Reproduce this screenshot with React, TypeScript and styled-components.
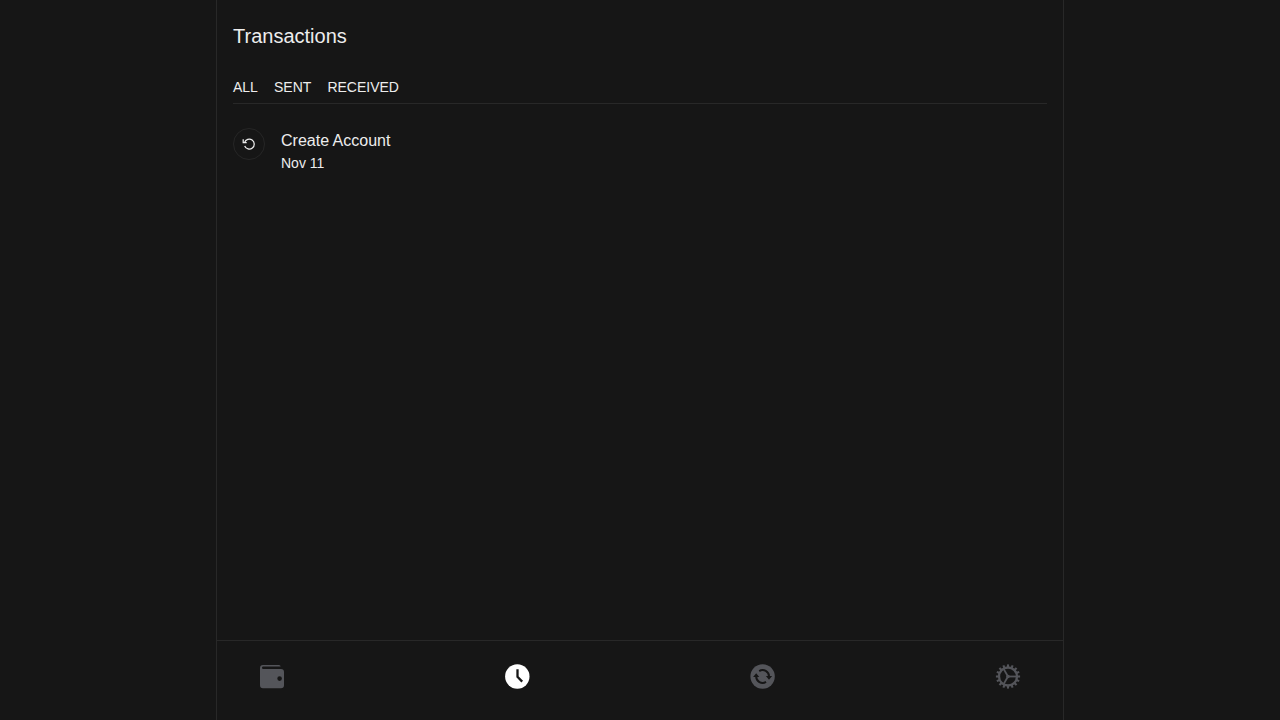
import React from "react";
import styled, { createGlobalStyle } from "styled-components";

const GlobalStyle = createGlobalStyle`
  * { box-sizing: border-box; }
  body {
    margin: 0;
    background: #161616;
    color: #ededed;
    font-family: "Liberation Sans", Helvetica, Arial, sans-serif;
    -webkit-font-smoothing: antialiased;
  }
`;

const Shell = styled.div`
  width: 848px;
  height: 100vh;
  margin: 0 auto;
  display: flex;
  flex-direction: column;
  border: solid #282828;
  border-width: 0 1px;
`;

const Content = styled.main`
  flex: 1;
  padding: 20px 16px 0;
`;

const Title = styled.h1`
  margin: 0;
  font-size: 20px;
  line-height: 32px;
  font-weight: 400;
`;

const Tabs = styled.div`
  display: flex;
  gap: 16px;
  margin-top: 24px;
  padding-bottom: 5px;
  border-bottom: 1px solid #282828;
`;

const Tab = styled.button<{ $width: number }>`
  width: ${(p) => p.$width}px;
  padding: 0;
  border: 0;
  background: none;
  color: inherit;
  font: 14px/22px "Liberation Sans", Helvetica, Arial, sans-serif;
  text-align: left;
  white-space: nowrap;
`;

const Row = styled.div`
  display: flex;
  gap: 16px;
  margin-top: 24px;
`;

const RowIcon = styled.div`
  width: 32px;
  height: 32px;
  display: grid;
  place-items: center;
  border: 1px solid #262626;
  border-radius: 50%;
`;

const RowText = styled.div`
  display: flex;
  flex-direction: column;
`;

const Name = styled.span`
  font-size: 16px;
  line-height: 26px;
`;

const DateText = styled.span`
  font-size: 14px;
  line-height: 18px;
`;

const Nav = styled.nav`
  height: 80px;
  padding: 23px 42px 0;
  display: flex;
  justify-content: space-between;
  border-top: 1px solid #282828;
`;

const NavItem = styled.a<{ $active?: boolean }>`
  width: 26px;
  height: 26px;
  color: ${(p) => (p.$active ? "#ffffff" : "#54555a")};

  svg { display: block; }
`;

const ResetIcon = () => (
  <svg width="16" height="16" viewBox="0 0 16 16" fill="none" stroke="#ededed" strokeWidth="1.25">
    <path d="M2.2 3.2v3.4h3.5" />
    <path d="M3.6 6.5A4.95 4.95 0 1 1 3.7 9.9" />
  </svg>
);

const WalletIcon = () => (
  <svg width="26" height="26" viewBox="0 0 26 26" fill="currentColor">
    <path
      fillRule="evenodd"
      d="M1 4A3 3 0 0 1 4 1H20a1.6 1.6 0 0 1 1.6 1.6H4.2a1.2 1.2 0 0 0 0 2.4H22a3 3 0 0 1 3 3v13.2a3 3 0 0 1-3 3H4a3 3 0 0 1-3-3ZM20.6 12.3a2.3 2.3 0 1 0 0 4.6 2.3 2.3 0 0 0 0-4.6Z"
    />
  </svg>
);

const ClockIcon = () => (
  <svg width="26" height="26" viewBox="0 0 26 26" fill="none">
    <circle cx="13.3" cy="12.5" r="12.2" fill="currentColor" />
    <path d="M13.5 5.3v7.5l4.7 4.8" stroke="#161616" strokeWidth="2.3" />
  </svg>
);

const SwapIcon = () => (
  <svg width="26" height="26" viewBox="0 0 26 26">
    <circle cx="12.6" cy="12.5" r="12.2" fill="currentColor" />
    <g fill="none" stroke="#161616" strokeWidth="2">
      <path d="M9.2 7.1A6.4 6.4 0 0 1 19 12.7" />
      <path d="M16 17.9A6.4 6.4 0 0 1 6.2 12.3" />
    </g>
    <path d="M15.9 12h6.2l-3.1 3.7ZM3.1 13h6.2l-3.1-3.7Z" fill="#161616" />
  </svg>
);

const TEETH = Array.from({ length: 16 }, (_, i) => i * 22.5);

const GearIcon = () => (
  <svg width="26" height="26" viewBox="0 0 26 26" fill="none" stroke="currentColor">
    <circle cx="13" cy="12.5" r="9" strokeWidth="2.3" />
    {TEETH.map((angle) => (
      <path key={angle} d="M13 .4v3" strokeWidth="2.1" transform={`rotate(${angle} 13 12.5)`} />
    ))}
    {[90, 210, 330].map((angle) => (
      <path key={angle} d="M13 12.5V4" strokeWidth="1.8" transform={`rotate(${angle} 13 12.5)`} />
    ))}
    <circle cx="13" cy="12.5" r="1.8" fill="currentColor" stroke="none" />
  </svg>
);

export default function App() {
  return (
    <>
      <GlobalStyle />
      <Shell>
        <Content>
          <Title>Transactions</Title>
          <Tabs>
            <Tab $width={25}>ALL</Tab>
            <Tab $width={37.4}>SENT</Tab>
            <Tab $width={72}>RECEIVED</Tab>
          </Tabs>
          <Row>
            <RowIcon><ResetIcon /></RowIcon>
            <RowText>
              <Name>Create Account</Name>
              <DateText>Nov 11</DateText>
            </RowText>
          </Row>
        </Content>
        <Nav>
          <NavItem><WalletIcon /></NavItem>
          <NavItem $active><ClockIcon /></NavItem>
          <NavItem><SwapIcon /></NavItem>
          <NavItem><GearIcon /></NavItem>
        </Nav>
      </Shell>
    </>
  );
}
